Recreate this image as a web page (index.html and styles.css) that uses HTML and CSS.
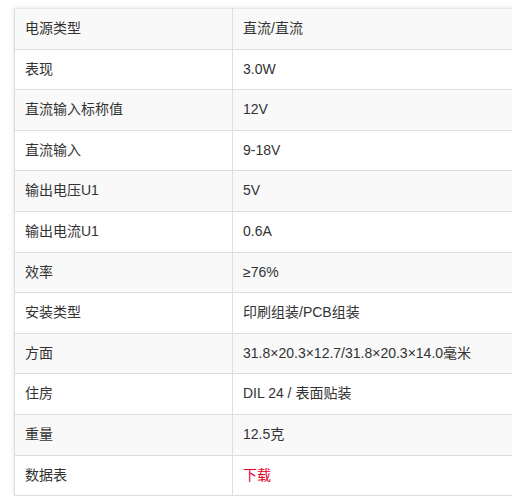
FILE: index.html
```html
<!DOCTYPE html>
<html lang="zh">
<head>
<meta charset="utf-8">
<link rel="stylesheet" href="styles.css">
</head>
<body>
<div class="wrap">
<table class="spec">
<tbody>
<tr><td>电源类型</td><td>直流/直流</td></tr>
<tr><td>表现</td><td>3.0W</td></tr>
<tr><td>直流输入标称值</td><td>12V</td></tr>
<tr><td>直流输入</td><td>9-18V</td></tr>
<tr><td>输出电压U1</td><td>5V</td></tr>
<tr><td>输出电流U1</td><td>0.6A</td></tr>
<tr><td>效率</td><td>≥76%</td></tr>
<tr><td>安装类型</td><td>印刷组装/PCB组装</td></tr>
<tr><td>方面</td><td>31.8×20.3×12.7/31.8×20.3×14.0毫米</td></tr>
<tr><td>住房</td><td>DIL 24 / 表面贴装</td></tr>
<tr><td>重量</td><td>12.5克</td></tr>
<tr><td>数据表</td><td><a class="dl" href="#">下载</a></td></tr>
</tbody>
</table>
</div>
</body>
</html>
```

FILE: styles.css
```css
html, body {
  margin: 0;
  padding: 0;
  background: #fff;
  overflow: hidden;
}
body {
  font-family: "Liberation Sans", "Noto Sans CJK SC", sans-serif;
  font-size: 14px;
  color: #333;
}
.wrap {
  padding: 8px 0 0 14px;
}
.spec {
  border-collapse: collapse;
  width: 560px;
  table-layout: fixed;
  box-shadow: 0 0 4px rgba(0, 0, 0, 0.12);
}
.spec td {
  border: 1px solid #dedede;
  padding: 12px 9px 12px 10px;
  line-height: 15.6px;
  height: 15.6px;
  white-space: nowrap;
}
.spec td:first-child {
  width: 198px;
}
.spec tr:nth-child(odd) td {
  background: #f9f9f9;
}
.spec tr:first-child td {
  border-top-color: #e8e8e8;
}
.dl {
  color: #e4002b;
  text-decoration: none;
}
```
